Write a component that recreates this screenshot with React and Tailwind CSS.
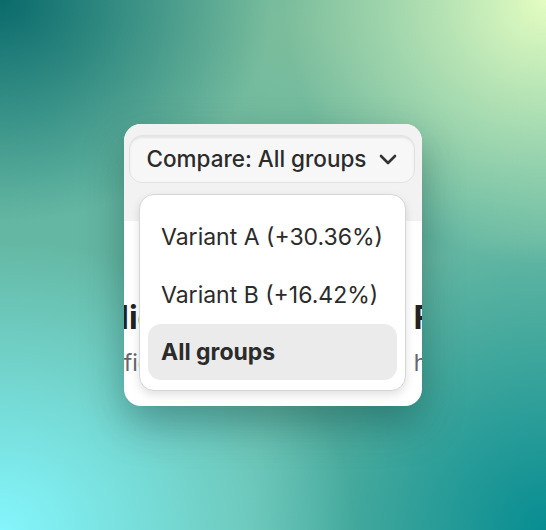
const options = [
  { label: "Variant A (+30.36%)", h: "h-[60px]" },
  { label: "Variant B (+16.42%)", h: "h-[57px]" },
  { label: "All groups", h: "h-[56px]", active: true },
];

function Chevron() {
  return (
    <svg width="18" height="11" viewBox="0 0 18 11" fill="none" className="shrink-0">
      <path d="M2 2l7 7 7-7" stroke="#333" strokeWidth="2.6" strokeLinecap="round" strokeLinejoin="round" />
    </svg>
  );
}

export default function App() {
  return (
    <div
      className="w-full h-[530px] flex items-center justify-center bg-[#64b7a2] bg-[radial-gradient(ellipse_50%_42%_at_0%_0%,#0a6a6b_0%,rgba(10,106,107,0)_100%),radial-gradient(ellipse_48%_50%_at_100%_0%,#e4fdc1_0%,rgba(228,253,193,0)_100%),radial-gradient(ellipse_65%_55%_at_0%_100%,#84f6fd_0%,rgba(132,246,253,0)_100%),radial-gradient(ellipse_55%_55%_at_100%_100%,#078d92_0%,rgba(7,141,146,0)_100%),radial-gradient(ellipse_50%_45%_at_55%_5%,#7cbd9c_0%,rgba(124,189,156,0)_100%)]"
      style={{ fontFamily: "Inter, 'Noto Sans', sans-serif" }}
    >
      {/* Card */}
      <div className="relative w-[298px] h-[282px] rounded-[17px] bg-white overflow-hidden shadow-[0_18px_40px_rgba(0,40,40,0.35)]">
        {/* Header with select button */}
        <div className="h-[97px] bg-[#f2f2f2] pt-[11px] pl-[5px] pr-[7px]">
          <button className="w-full h-[48px] rounded-[13px] bg-[#f7f7f7] border border-[#e2e2e2] shadow-[inset_0_2px_2px_rgba(0,0,0,0.08)] flex items-center justify-center gap-[13px] text-[#2b2b2b] text-[22.5px] font-medium">
            Compare: All groups
            <Chevron />
          </button>
        </div>

        {/* Content behind the menu */}
        <div className="pt-[80px] whitespace-nowrap">
          <div className="flex -ml-[19px] gap-[149px] text-[32px] font-bold text-[#222] leading-[34px]">
            <span>Highlights</span>
            <span>Funnel</span>
          </div>
          <div className="flex -ml-[43px] gap-[196px] text-[23px] text-[#666] leading-[28px] mt-[14px]">
            <span>Traffic share</span>
            <span>has grown</span>
          </div>
        </div>

        {/* Dropdown menu */}
        <div className="absolute left-[15px] top-[70px] w-[267px] rounded-[15px] bg-white border border-[#d6d6d6] shadow-[0_4px_10px_rgba(0,0,0,0.12)] pt-[12px] pb-[10px] px-[8px]">
          {options.map((o) => (
            <div
              key={o.label}
              className={`${o.h} flex items-center pl-[13px] rounded-[13px] text-[23px] text-[#2b2b2b] ${
                o.active ? "bg-[#ebebeb] font-bold" : "font-normal"
              }`}
            >
              {o.label}
            </div>
          ))}
        </div>
      </div>
    </div>
  );
}
